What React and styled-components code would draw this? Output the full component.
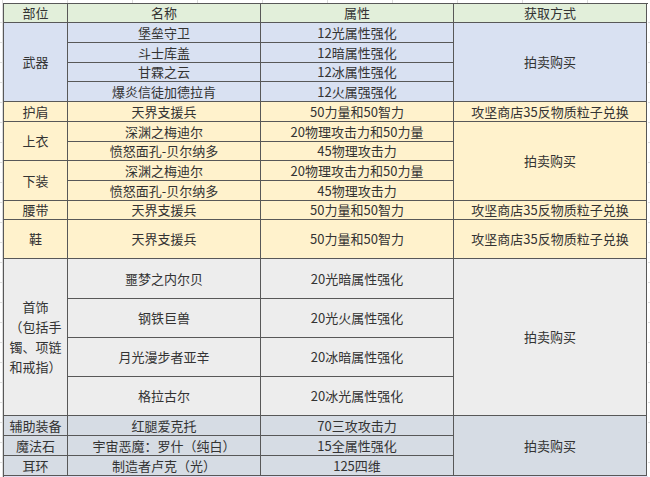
import React from "react";
import styled, { createGlobalStyle } from "styled-components";

const GlobalStyle = createGlobalStyle`
  html, body { margin: 0; padding: 0; background: #ffffff; }
  body {
    font-family: "Noto Sans CJK SC", "Noto Sans", "Liberation Sans", sans-serif;
    color: #333333;
  }
`;

const C = {
  green: "#e2efda",
  blue: "#d9e1f2",
  yellow: "#fff2cc",
  gray: "#ededed",
  slate: "#d6dce4",
  violet: "#e4dcf0",
  line: "#585858",
};

const Sheet = styled.div`
  width: 650px;
  height: 477px;
  overflow: hidden;
  box-sizing: border-box;
  padding: 3px 0 0 3px;
  background-color: #ffffff;
  background-image:
    repeating-linear-gradient(to right, transparent 0, transparent 64px, #dcdcdc 64px, #dcdcdc 65px),
    repeating-linear-gradient(to bottom, transparent 0, transparent 19px, #dcdcdc 19px, #dcdcdc 20px);
  background-position: 3px 0, 0 3px;
`;

const Table = styled.div`
  display: grid;
  width: 644px;
  grid-template-columns: 64px 193px 193px 193px;
  grid-template-rows: ${(p) => p.$rows.map((h) => `${h}px`).join(" ")};
  border-top: 1px solid ${C.line};
  border-left: 1px solid ${C.line};
  background: #ffffff;
`;

const Cell = styled.div`
  grid-column: ${(p) => p.$col};
  grid-row: ${(p) => p.$row} / span ${(p) => p.$span || 1};
  background: ${(p) => p.$bg};
  border-right: 1px solid ${C.line};
  border-bottom: 1px solid ${C.line};
  display: flex;
  align-items: center;
  justify-content: center;
  text-align: center;
  font-size: 13px;
  line-height: 20px;
  white-space: pre-line;
  color: #333333;
  overflow: hidden;
`;

const TrailRow = styled.div`
  width: 644px;
  height: 20px;
  background: ${C.violet};
  border-left: 1px solid ${C.line};
`;

const rows = [19, 20, 20, 19, 20, 20, 20, 19, 20, 20, 19, 39, 40, 39, 39, 39, 20, 20, 20];

const cells = [
  // header
  { col: 1, row: 1, bg: C.green, text: "部位" },
  { col: 2, row: 1, bg: C.green, text: "名称" },
  { col: 3, row: 1, bg: C.green, text: "属性" },
  { col: 4, row: 1, bg: C.green, text: "获取方式" },
  // weapons
  { col: 1, row: 2, span: 4, bg: C.blue, text: "武器" },
  { col: 2, row: 2, bg: C.blue, text: "堡垒守卫" },
  { col: 3, row: 2, bg: C.blue, text: "12光属性强化" },
  { col: 2, row: 3, bg: C.blue, text: "斗士库盖" },
  { col: 3, row: 3, bg: C.blue, text: "12暗属性强化" },
  { col: 2, row: 4, bg: C.blue, text: "甘霖之云" },
  { col: 3, row: 4, bg: C.blue, text: "12冰属性强化" },
  { col: 2, row: 5, bg: C.blue, text: "爆炎信徒加德拉肯" },
  { col: 3, row: 5, bg: C.blue, text: "12火属强强化" },
  { col: 4, row: 2, span: 4, bg: C.blue, text: "拍卖购买" },
  // shoulder
  { col: 1, row: 6, bg: C.yellow, text: "护肩" },
  { col: 2, row: 6, bg: C.yellow, text: "天界支援兵" },
  { col: 3, row: 6, bg: C.yellow, text: "50力量和50智力" },
  { col: 4, row: 6, bg: C.yellow, text: "攻坚商店35反物质粒子兑换" },
  // top
  { col: 1, row: 7, span: 2, bg: C.yellow, text: "上衣" },
  { col: 2, row: 7, bg: C.yellow, text: "深渊之梅迪尔" },
  { col: 3, row: 7, bg: C.yellow, text: "20物理攻击力和50力量" },
  { col: 2, row: 8, bg: C.yellow, text: "愤怒面孔-贝尔纳多" },
  { col: 3, row: 8, bg: C.yellow, text: "45物理攻击力" },
  // pants
  { col: 1, row: 9, span: 2, bg: C.yellow, text: "下装" },
  { col: 2, row: 9, bg: C.yellow, text: "深渊之梅迪尔" },
  { col: 3, row: 9, bg: C.yellow, text: "20物理攻击力和50力量" },
  { col: 2, row: 10, bg: C.yellow, text: "愤怒面孔-贝尔纳多" },
  { col: 3, row: 10, bg: C.yellow, text: "45物理攻击力" },
  { col: 4, row: 7, span: 4, bg: C.yellow, text: "拍卖购买" },
  // belt
  { col: 1, row: 11, bg: C.yellow, text: "腰带" },
  { col: 2, row: 11, bg: C.yellow, text: "天界支援兵" },
  { col: 3, row: 11, bg: C.yellow, text: "50力量和50智力" },
  { col: 4, row: 11, bg: C.yellow, text: "攻坚商店35反物质粒子兑换" },
  // shoes
  { col: 1, row: 12, bg: C.yellow, text: "鞋" },
  { col: 2, row: 12, bg: C.yellow, text: "天界支援兵" },
  { col: 3, row: 12, bg: C.yellow, text: "50力量和50智力" },
  { col: 4, row: 12, bg: C.yellow, text: "攻坚商店35反物质粒子兑换" },
  // accessories
  { col: 1, row: 13, span: 4, bg: C.gray, text: "首饰\n（包括手\n镯、项链\n和戒指）" },
  { col: 2, row: 13, bg: C.gray, text: "噩梦之内尔贝" },
  { col: 3, row: 13, bg: C.gray, text: "20光暗属性强化" },
  { col: 2, row: 14, bg: C.gray, text: "钢铁巨兽" },
  { col: 3, row: 14, bg: C.gray, text: "20光火属性强化" },
  { col: 2, row: 15, bg: C.gray, text: "月光漫步者亚辛" },
  { col: 3, row: 15, bg: C.gray, text: "20冰暗属性强化" },
  { col: 2, row: 16, bg: C.gray, text: "格拉古尔" },
  { col: 3, row: 16, bg: C.gray, text: "20冰光属性强化" },
  { col: 4, row: 13, span: 4, bg: C.gray, text: "拍卖购买" },
  // misc
  { col: 1, row: 17, bg: C.slate, text: "辅助装备" },
  { col: 2, row: 17, bg: C.slate, text: "红腿爱克托" },
  { col: 3, row: 17, bg: C.slate, text: "70三攻攻击力" },
  { col: 1, row: 18, bg: C.slate, text: "魔法石" },
  { col: 2, row: 18, bg: C.slate, text: "宇宙恶魔：罗什（纯白）" },
  { col: 3, row: 18, bg: C.slate, text: "15全属性强化" },
  { col: 1, row: 19, bg: C.slate, text: "耳环" },
  { col: 2, row: 19, bg: C.slate, text: "制造者卢克（光）" },
  { col: 3, row: 19, bg: C.slate, text: "125四维" },
  { col: 4, row: 17, span: 3, bg: C.slate, text: "拍卖购买" },
];

export default function App() {
  return (
    <>
      <GlobalStyle />
      <Sheet>
        <Table $rows={rows}>
          {cells.map((c, i) => (
            <Cell key={i} $col={c.col} $row={c.row} $span={c.span} $bg={c.bg}>
              {c.text}
            </Cell>
          ))}
        </Table>
        <TrailRow />
      </Sheet>
    </>
  );
}
